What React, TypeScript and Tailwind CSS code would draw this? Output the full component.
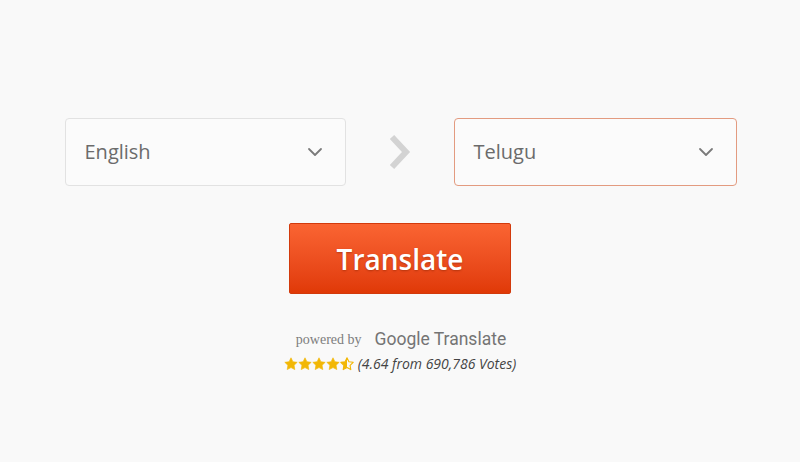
import React from "react";

function Chevron() {
  return (
    <svg width="16" height="10" viewBox="0 0 16 10" fill="none">
      <path d="M2 2 L8 8 L14 2" stroke="#7a7a7a" strokeWidth="1.8" strokeLinecap="round" strokeLinejoin="round" />
    </svg>
  );
}

function Star({ half = false, id }: { half?: boolean; id: string }) {
  const d = "M7 0.8 L8.9 4.7 L13.2 5.3 L10.1 8.3 L10.8 12.6 L7 10.6 L3.2 12.6 L3.9 8.3 L0.8 5.3 L5.1 4.7 Z";
  return (
    <svg width="14" height="14" viewBox="0 0 14 14">
      {half ? (
        <>
          <defs>
            <clipPath id={id}>
              <rect x="0" y="0" width="7" height="14" />
            </clipPath>
          </defs>
          <path d={d} fill="none" stroke="#f2b705" strokeWidth="1.1" strokeLinejoin="round" />
          <path d={d} fill="#f2b705" clipPath={`url(#${id})`} />
        </>
      ) : (
        <path d={d} fill="#f2b705" stroke="#f2b705" strokeWidth="0.6" strokeLinejoin="round" />
      )}
    </svg>
  );
}

export default function App() {
  return (
    <div className="w-[800px] h-[462px] bg-[#f9f9f9] flex flex-col items-center" style={{ fontFamily: '"Open Sans", sans-serif' }}>
      <div className="flex items-center mt-[118px] w-[672px] ml-[1px]">
        <div className="w-[281px] h-[68px] border border-[#e2e2e2] rounded-[4px] bg-[#fbfbfb] flex items-center justify-between pl-[19px] pr-[22px]">
          <span className="text-[20px] text-[#6b6b6b]">English</span>
          <Chevron />
        </div>
        <div className="w-[108px] flex justify-center">
          <svg width="26" height="40" viewBox="0 0 26 40" fill="none">
            <path d="M5 5 L19 20 L5 35" stroke="#d3d3d3" strokeWidth="6" strokeLinecap="butt" strokeLinejoin="miter" />
          </svg>
        </div>
        <div className="w-[283px] h-[68px] border border-[#e39b80] rounded-[4px] bg-[#fbfbfb] flex items-center justify-between pl-[19px] pr-[22px]">
          <span className="text-[20px] text-[#6b6b6b]">Telugu</span>
          <Chevron />
        </div>
      </div>
      <button className="mt-[37px] w-[222px] h-[71px] rounded-[2px] border border-[#d23a0c] bg-gradient-to-b from-[#fa6432] to-[#e03906] flex items-center justify-center text-white text-[28px] font-semibold [text-shadow:0_1px_2px_rgba(120,30,0,0.45)]">
        Translate
      </button>
      <div className="mt-[34px] flex items-end gap-[13px] ml-[2px]">
        <span className="text-[14px] text-[#7d7d7d] leading-[20px]" style={{ fontFamily: '"Liberation Serif", serif' }}>powered by</span>
        <span className="text-[17.5px] text-[#747474] leading-[22px]" style={{ fontFamily: 'Roboto, sans-serif' }}>
          Google Translate
        </span>
      </div>
      <div className="mt-[3px] flex items-center gap-[4px]">
        <div className="flex">
          <Star id="s1" />
          <Star id="s2" />
          <Star id="s3" />
          <Star id="s4" />
          <Star id="s5" half />
        </div>
        <span className="text-[14px] italic text-[#444]">(4.64 from 690,786 Votes)</span>
      </div>
    </div>
  );
}
